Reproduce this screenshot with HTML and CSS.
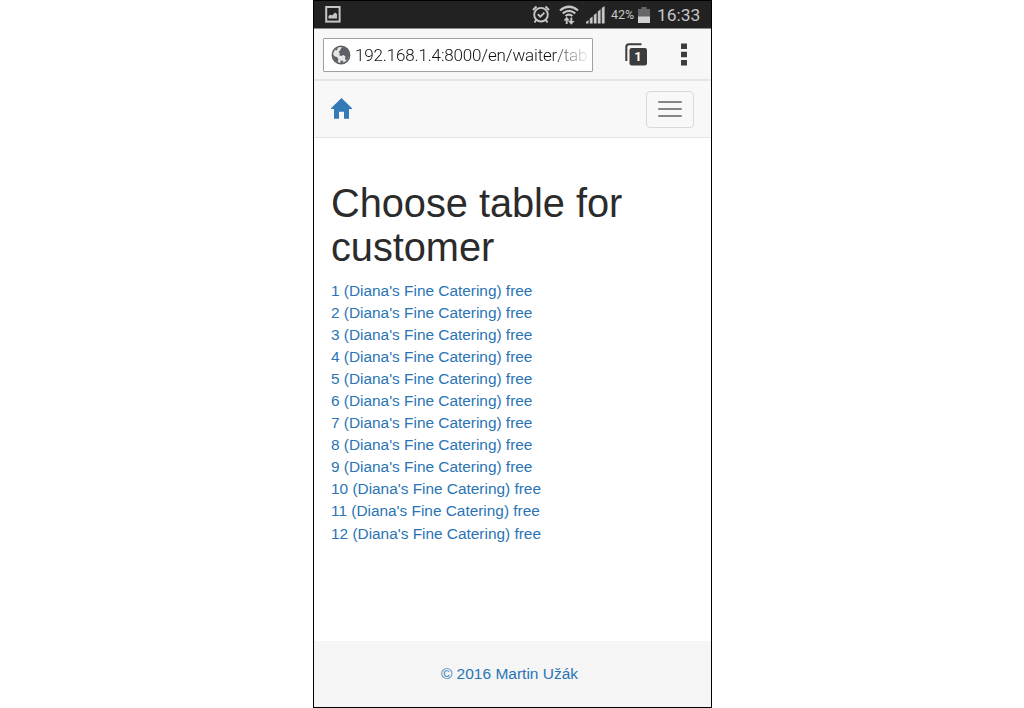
FILE: index.html
```html
<!DOCTYPE html>
<html lang="en">
<head>
<meta charset="utf-8">
<title>Choose table for customer</title>
<link rel="stylesheet" href="styles.css">
</head>
<body>
<div class="phone">
  <div class="status">
    <svg class="shot" width="16" height="17" viewBox="0 0 16 17"><rect x="1.200" y="1" width="13.400" height="14.600" fill="none" stroke="#c6c6c6" stroke-width="2"/><path d="M3.500 12.500V10l2-1.500 1.500 1 3-3 2 1.500v4.500z" fill="#c6c6c6"/></svg>
    <svg class="alarm" width="18" height="19" viewBox="0 0 18 19" fill="none" stroke="#c6c6c6"><circle cx="9" cy="9.700" r="6.800" stroke-width="1.900"/><path d="M1 5l3.500-3.500M17 5l-3.500-3.500M4.300 14.800L2.500 17.500M13.700 14.800l1.800 2.700M5.800 9.200l2.600 2.500 4-4" stroke-width="1.900"/></svg>
    <svg class="wifi" width="20" height="20" viewBox="0 0 20 20" fill="none" stroke="#c6c6c6"><path d="M1 5.500Q10-2 19 5.500M3.700 8.400q6.300-5 12.600 0M6.500 11q3.500-2.800 7 0" stroke-width="2.200"/><path d="M7.700 19v-5M12.300 12.500v5" stroke-width="1.900"/><path d="M4.500 15.500l3.200-3.700 3.200 3.700zM9 16h6.600l-3.300 3.800z" fill="#c6c6c6" stroke="none"/></svg>
    <svg class="signal" width="19" height="18" viewBox="0 0 19 18" fill="#c6c6c6"><path d="M0 16l2.500-2V17.500H0zM3.800 12.500l2.800-2v7H3.800zM7.800 9l2.800-2v10.500H7.800zM11.800 5.500l2.800-2.200V17.500h-2.800zM15.800 2L18.600 0v17.500h-2.800z"/></svg>
    <span class="percent">42%</span>
    <svg class="battery" width="12" height="16" viewBox="0 0 12 16"><path d="M3.500 0h5v2H12v14H0V2h3.500z" fill="#666"/><path d="M0 9.500h12V16H0z" fill="#d0d0d0"/></svg>
    <span class="clock">16:33</span>
  </div>
  <div class="browser">
    <div class="address">
      <svg width="20" height="20" viewBox="0 0 20 20"><circle cx="10" cy="10" r="8.700" fill="#e6e6e6" stroke="#5c6064" stroke-width="1.500"/><path d="M9 5.500l2-3.500c4 0 7 3.500 7.500 8L17 13.500l-1.500 2-1.500-1.500.5-2.500-2-1.500-2.500 1-2-1 1-1.500-1.500-1.500zM1.500 9l2.500 2.500 2 .5 1.500 2.500-1 2.800C3.500 16 1.500 13 1.500 9zM9.500 15.500l3 .5-1 2.300-2-.3zM4 5l2-2 1 .5-1.500 2z" fill="#5c6064"/></svg>
      <span class="url">192.168.1.4:8000/en/waiter/tab</span>
    </div>
    <svg class="tabs" width="23" height="23" viewBox="0 0 23 23"><path d="M1.300 18V4Q1.300 1.300 4 1.300h12.500" fill="none" stroke="#3c3c3c" stroke-width="2"/><rect x="4.500" y="5" width="17.500" height="17.500" rx="2.200" fill="#3c3c3c"/><text x="13" y="18.200" text-anchor="middle" class="tabcount">1</text></svg>
    <svg class="more" width="6" height="23" viewBox="0 0 6 23" fill="#3c3c3c"><path d="M0 0.500h6v5.500H0zM0 8.700h6v5.500H0zM0 17h6v5.500H0z"/></svg>
  </div>
  <nav class="navbar">
    <a href="#" class="home" aria-label="Home"><svg width="21" height="21" viewBox="0 0 21 21"><path d="M10.500 0L21 10.300v.7h-3V20.700h-5V13.700H8v7H3V11H0v-.7z" fill="#337ab7"/></svg></a>
    <button class="toggle" aria-label="Menu"><span></span><span></span><span></span></button>
  </nav>
  <main>
    <h1>Choose table for customer</h1>
    <ul>
      <li><a href="#">1 (Diana's Fine Catering) free</a></li>
      <li><a href="#">2 (Diana's Fine Catering) free</a></li>
      <li><a href="#">3 (Diana's Fine Catering) free</a></li>
      <li><a href="#">4 (Diana's Fine Catering) free</a></li>
      <li><a href="#">5 (Diana's Fine Catering) free</a></li>
      <li><a href="#">6 (Diana's Fine Catering) free</a></li>
      <li><a href="#">7 (Diana's Fine Catering) free</a></li>
      <li><a href="#">8 (Diana's Fine Catering) free</a></li>
      <li><a href="#">9 (Diana's Fine Catering) free</a></li>
      <li><a href="#">10 (Diana's Fine Catering) free</a></li>
      <li><a href="#">11 (Diana's Fine Catering) free</a></li>
      <li><a href="#">12 (Diana's Fine Catering) free</a></li>
    </ul>
  </main>
  <footer><a href="#">© 2016 Martin Užák</a></footer>
</div>
</body>
</html>
```
FILE: styles.css
```css
* { box-sizing: border-box; }
body {
  margin: 0;
  background: #fff;
  font-family: "Liberation Sans", Arial, sans-serif;
  overflow: hidden;
}
svg { display: block; flex: none; }
a { color: #2a74b5; text-decoration: none; }
.phone {
  width: 399px;
  height: 708px;
  margin-left: 313px;
  border: 1px solid #000;
  display: flex;
  flex-direction: column;
  background: #fff;
}
.status {
  height: 28px;
  flex: none;
  display: flex;
  align-items: center;
  background: #222;
  border-bottom: 1px solid #8c8c8c;
  color: #c6c6c6;
  font-family: Roboto, sans-serif;
  white-space: nowrap;
}
.shot { margin-left: 11px; }
.alarm { margin-left: 191px; }
.wifi { margin-left: 9px; }
.signal { margin-left: 7px; }
.percent { width: 27px; margin-left: 6px; font-size: 12.5px; }
.battery { margin-left: 0; }
.clock { margin-left: 7px; font-size: 17.4px; }
.browser {
  height: 52px;
  flex: none;
  display: flex;
  align-items: center;
  background: #f7f7f7;
  border-bottom: 2px solid #e5e5e5;
}
.address {
  width: 270px;
  height: 34px;
  margin-left: 9px;
  margin-top: 1px;
  padding-left: 7px;
  display: flex;
  align-items: center;
  background: #fff;
  border: 1px solid #a0a0a0;
  border-radius: 1px;
}
.url {
  width: 235px;
  margin-left: 4px;
  white-space: nowrap;
  font: 300 17px/24px Roboto, sans-serif;
  letter-spacing: -0.16px;
  color: transparent;
  background: linear-gradient(to right, #111 195px, rgba(17, 17, 17, 0.1) 232px);
  -webkit-background-clip: text;
  background-clip: text;
}
.tabs { margin-left: 32px; }
.tabcount { font: bold 13px Roboto, sans-serif; fill: #fff; }
.more { margin-left: 33px; }
.navbar {
  height: 57px;
  flex: none;
  display: flex;
  align-items: center;
  justify-content: space-between;
  padding: 0 17px;
  background: #f8f8f8;
  border-bottom: 1px solid #e5e5e5;
}
.home { padding-bottom: 2px; }
.toggle {
  width: 48px;
  height: 37px;
  padding: 0 11px;
  display: flex;
  flex-direction: column;
  justify-content: center;
  gap: 5px;
  background: transparent;
  border: 1px solid #d9d9d9;
  border-radius: 4px;
}
.toggle span { height: 2px; border-radius: 1px; background: #858585; }
main { flex: 1; padding: 43px 17px 0; }
h1 {
  margin: 0 0 11px;
  font-size: 39.8px;
  font-weight: 400;
  letter-spacing: -0.05px;
  line-height: 44px;
  color: #2b2b2b;
}
ul { margin: 0; padding: 0; list-style: none; }
li { height: 22.05px; font-size: 15.4px; line-height: 22px; }
footer {
  height: 66px;
  flex: none;
  display: flex;
  align-items: center;
  justify-content: center;
  padding-right: 6px;
  background: #f5f5f5;
  font-size: 15.5px;
}
```
